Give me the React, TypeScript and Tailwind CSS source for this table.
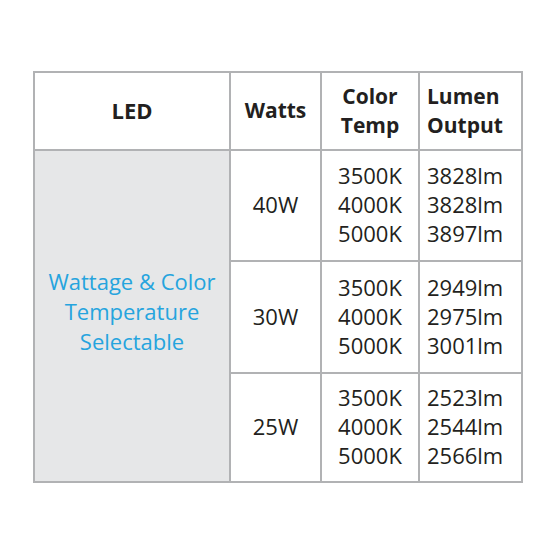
import React from "react";

const rows = [
  { w: "40W", temps: ["3500K", "4000K", "5000K"], lm: ["3828lm", "3828lm", "3897lm"] },
  { w: "30W", temps: ["3500K", "4000K", "5000K"], lm: ["2949lm", "2975lm", "3001lm"] },
  { w: "25W", temps: ["3500K", "4000K", "5000K"], lm: ["2523lm", "2544lm", "2566lm"] },
];

export default function App() {
  return (
    <div
      className="w-[560px] h-[560px] bg-white pt-[71px] pl-[33px]"
      style={{ fontFamily: '"Open Sans", "Noto Sans", sans-serif' }}
    >
      <div className="w-[490px] bg-[#b1b2b4] p-[2px] grid grid-cols-[194px_89px_96px_101px] grid-rows-[76px_109px_110px_107px] gap-[2px] text-[#231f20]">
        <div className="bg-white flex items-center justify-center font-bold text-[22px] leading-[28px] pb-[3px]">LED</div>
        <div className="bg-white flex items-center justify-center font-bold text-[21px] leading-[28px] pb-[3px]">Watts</div>
        <div className="bg-white flex flex-col items-center justify-center font-bold text-[21px] leading-[29px]">
          <span>Color</span>
          <span>Temp</span>
        </div>
        <div className="bg-white flex flex-col justify-center pl-[7px] font-bold text-[21px] leading-[29px]">
          <span>Lumen</span>
          <span>Output</span>
        </div>
        <div className="bg-[#e6e7e8] row-span-3 flex flex-col items-center justify-center text-[#25a4de] text-[22px] leading-[30px] pb-[10px]">
          <span>Wattage &amp; Color</span>
          <span>Temperature</span>
          <span>Selectable</span>
        </div>
        {rows.map((r) => (
          <React.Fragment key={r.w}>
            <div className="bg-white flex items-center justify-center text-[22px] pb-[2px]">{r.w}</div>
            <div className="bg-white flex flex-col items-center justify-center text-[22px] leading-[29px] pb-[2px]">
              {r.temps.map((t) => (
                <span key={t}>{t}</span>
              ))}
            </div>
            <div className="bg-white flex flex-col justify-center pl-[7px] text-[22px] leading-[29px] pb-[2px]">
              {r.lm.map((t, i) => (
                <span key={i}>{t}</span>
              ))}
            </div>
          </React.Fragment>
        ))}
      </div>
    </div>
  );
}
